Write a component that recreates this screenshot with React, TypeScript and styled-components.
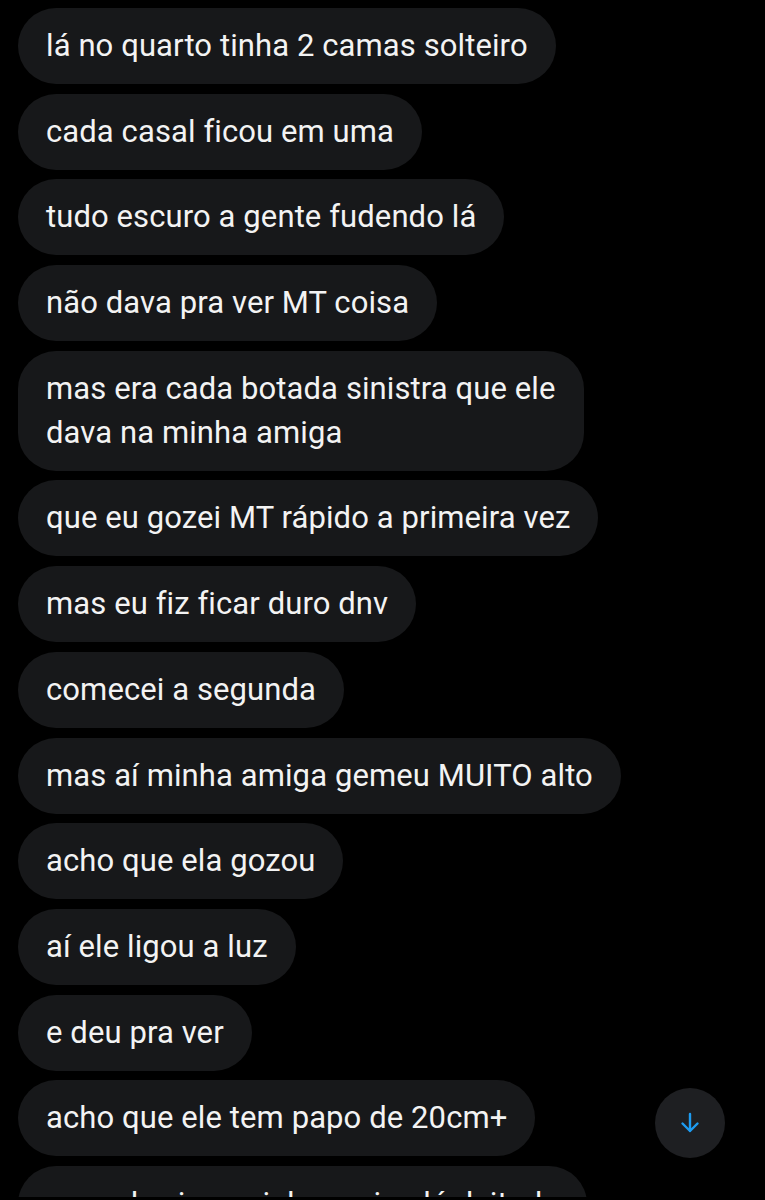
import React from 'react';
import styled, { createGlobalStyle } from 'styled-components';

const GlobalStyle = createGlobalStyle`
  html, body {
    margin: 0;
    padding: 0;
    background: #000000;
  }
  body {
    font-family: Roboto, "Noto Sans", "Liberation Sans", sans-serif;
  }
`;

const Screen = styled.div`
  position: relative;
  width: 765px;
  height: 1197px;
  overflow: hidden;
  background: #000000;
`;

const Thread = styled.div`
  display: flex;
  flex-direction: column;
  align-items: flex-start;
  row-gap: 9.7px;
  padding: 8px 0 0 18px;
`;

// line breaks come from the data so the bubble hugs its longest line
const Bubble = styled.div`
  padding: 16px 28px;
  border-radius: 38px;
  background: #17181a;
  color: #f3f3f3;
  font-size: 31px;
  line-height: 44px;
  letter-spacing: 0.1px;
  white-space: pre-line;
`;

const ScrollButton = styled.button`
  position: absolute;
  left: 655px;
  top: 1088px;
  width: 70px;
  height: 70px;
  border: none;
  border-radius: 50%;
  background: #1e1f22;
  display: flex;
  align-items: center;
  justify-content: center;
  padding: 0;
`;

const messages = [
  'lá no quarto tinha 2 camas solteiro',
  'cada casal ficou em uma',
  'tudo escuro a gente fudendo lá',
  'não dava pra ver MT coisa',
  'mas era cada botada sinistra que ele\ndava na minha amiga',
  'que eu gozei MT rápido a primeira vez',
  'mas eu fiz ficar duro dnv',
  'comecei a segunda',
  'mas aí minha amiga gemeu MUITO alto',
  'acho que ela gozou',
  'aí ele ligou a luz',
  'e deu pra ver',
  'acho que ele tem papo de 20cm+',
  'mas ele viu a minha amiga lá deitada',
];

const App = () => {
  return (
    <Screen>
      <GlobalStyle />
      <Thread>
        {messages.map((m) => (
          <Bubble key={m}>{m}</Bubble>
        ))}
      </Thread>
      <ScrollButton aria-label="Scroll to bottom">
        <svg width="24" height="24" viewBox="0 0 24 24" fill="none">
          <path
            d="M12 3v17M4.5 12.5 12 20l7.5-7.5"
            stroke="#1d9bf0"
            strokeWidth="2.4"
            strokeLinecap="round"
            strokeLinejoin="round"
          />
        </svg>
      </ScrollButton>
    </Screen>
  );
};

export default App;
